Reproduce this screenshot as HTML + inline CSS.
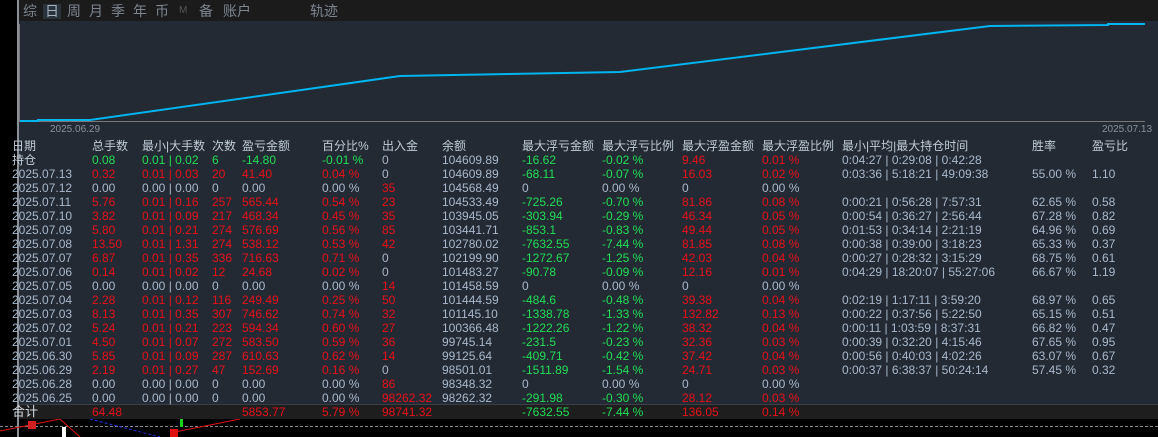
<!DOCTYPE html>
<html><head><meta charset="utf-8"><style>
*{margin:0;padding:0;box-sizing:border-box}
body{width:1158px;height:437px;background:#000;position:relative;overflow:hidden;font-family:"Liberation Sans","Noto Sans CJK SC",sans-serif}
#top{position:absolute;left:19px;top:0;width:1139px;height:21px;background:#1b1b1b}
.tab{position:absolute;top:3px;font-size:14px;color:#7c8590;line-height:16px}
#panel{position:absolute;left:19px;top:21px;width:1139px;height:398px;background:#232a33}
#tot{position:absolute;left:19px;top:404px;width:1139px;height:15px;background:#1e1e1e;border-top:1px solid #3a3f45}
table{position:absolute;left:12px;top:139px;border-collapse:collapse;table-layout:fixed;font-size:12px;color:#a8b8cc}
td{height:14px;line-height:14px;padding:0;white-space:nowrap;overflow:visible}
tr.h td{font-size:12px;color:#c0ccd8;height:14px}
.g{color:#22dd55}.r{color:#e8101a}
</style></head><body>
<div style="position:absolute;left:17px;top:0;width:2px;height:437px;background:#8a9098"></div>
<div id="top"></div>
<div class="tab" style="left:23px">综</div>
<div style="position:absolute;left:43px;top:4px;width:18px;height:15px;background:#2a323c"></div>
<div class="tab" style="left:45px;color:#a8b4c0">日</div>
<div class="tab" style="left:67px">周</div>
<div class="tab" style="left:89px">月</div>
<div class="tab" style="left:111px">季</div>
<div class="tab" style="left:133px">年</div>
<div class="tab" style="left:155px">币</div>
<div class="tab" style="left:179px;font-size:10px;color:#555">M</div>
<div class="tab" style="left:199px">备</div>
<div class="tab" style="left:223px">账户</div>
<div class="tab" style="left:310px">轨迹</div>
<div id="panel"></div>
<svg style="position:absolute;left:0;top:0" width="1158" height="140">
<line x1="19.5" y1="24" x2="19.5" y2="122" stroke="#777" stroke-width="1"/>
<line x1="19" y1="121.5" x2="1145" y2="121.5" stroke="#777" stroke-width="1"/>
<polyline fill="none" stroke="#00b4f0" stroke-width="2" points="20,121 38,121 38,120 90,120 400,76 620,72 990,26 1108,25 1108,24 1145,24"/>
<text x="50" y="132" font-size="10" fill="#8890a0" font-family="Liberation Sans">2025.06.29</text>
<text x="1102" y="132" font-size="10" fill="#8890a0" font-family="Liberation Sans">2025.07.13</text>
</svg>
<div id="tot"></div>
<table>
<colgroup><col style="width:80px"><col style="width:50px"><col style="width:70px"><col style="width:30px"><col style="width:80px"><col style="width:60px"><col style="width:60px"><col style="width:80px"><col style="width:80px"><col style="width:80px"><col style="width:80px"><col style="width:80px"><col style="width:190px"><col style="width:60px"><col style="width:60px"></colgroup>
<tr class="h"><td>日期</td><td>总手数</td><td>最小|大手数</td><td>次数</td><td>盈亏金额</td><td>百分比%</td><td>出入金</td><td>余额</td><td>最大浮亏金额</td><td>最大浮亏比例</td><td>最大浮盈金额</td><td>最大浮盈比例</td><td>最小|平均|最大持仓时间</td><td>胜率</td><td>盈亏比</td></tr>
<tr><td style="color:#c0ccd8">持仓</td><td class="g">0.08</td><td class="g">0.01 | 0.02</td><td class="g">6</td><td class="g">-14.80</td><td class="g">-0.01 %</td><td>0</td><td>104609.89</td><td class="g">-16.62</td><td class="g">-0.02 %</td><td class="r">9.46</td><td class="r">0.01 %</td><td>0:04:27 | 0:29:08 | 0:42:28</td><td></td><td></td></tr>
<tr><td>2025.07.13</td><td class="r">0.32</td><td class="r">0.01 | 0.03</td><td class="r">20</td><td class="r">41.40</td><td class="r">0.04 %</td><td>0</td><td>104609.89</td><td class="g">-68.11</td><td class="g">-0.07 %</td><td class="r">16.03</td><td class="r">0.02 %</td><td>0:03:36 | 5:18:21 | 49:09:38</td><td>55.00 %</td><td>1.10</td></tr>
<tr><td>2025.07.12</td><td>0.00</td><td>0.00 | 0.00</td><td>0</td><td>0.00</td><td>0.00 %</td><td class="r">35</td><td>104568.49</td><td>0</td><td>0.00 %</td><td>0</td><td>0.00 %</td><td></td><td></td><td></td></tr>
<tr><td>2025.07.11</td><td class="r">5.76</td><td class="r">0.01 | 0.16</td><td class="r">257</td><td class="r">565.44</td><td class="r">0.54 %</td><td class="r">23</td><td>104533.49</td><td class="g">-725.26</td><td class="g">-0.70 %</td><td class="r">81.86</td><td class="r">0.08 %</td><td>0:00:21 | 0:56:28 | 7:57:31</td><td>62.65 %</td><td>0.58</td></tr>
<tr><td>2025.07.10</td><td class="r">3.82</td><td class="r">0.01 | 0.09</td><td class="r">217</td><td class="r">468.34</td><td class="r">0.45 %</td><td class="r">35</td><td>103945.05</td><td class="g">-303.94</td><td class="g">-0.29 %</td><td class="r">46.34</td><td class="r">0.05 %</td><td>0:00:54 | 0:36:27 | 2:56:44</td><td>67.28 %</td><td>0.82</td></tr>
<tr><td>2025.07.09</td><td class="r">5.80</td><td class="r">0.01 | 0.21</td><td class="r">274</td><td class="r">576.69</td><td class="r">0.56 %</td><td class="r">85</td><td>103441.71</td><td class="g">-853.1</td><td class="g">-0.83 %</td><td class="r">49.44</td><td class="r">0.05 %</td><td>0:01:53 | 0:34:14 | 2:21:19</td><td>64.96 %</td><td>0.69</td></tr>
<tr><td>2025.07.08</td><td class="r">13.50</td><td class="r">0.01 | 1.31</td><td class="r">274</td><td class="r">538.12</td><td class="r">0.53 %</td><td class="r">42</td><td>102780.02</td><td class="g">-7632.55</td><td class="g">-7.44 %</td><td class="r">81.85</td><td class="r">0.08 %</td><td>0:00:38 | 0:39:00 | 3:18:23</td><td>65.33 %</td><td>0.37</td></tr>
<tr><td>2025.07.07</td><td class="r">6.87</td><td class="r">0.01 | 0.35</td><td class="r">336</td><td class="r">716.63</td><td class="r">0.71 %</td><td>0</td><td>102199.90</td><td class="g">-1272.67</td><td class="g">-1.25 %</td><td class="r">42.03</td><td class="r">0.04 %</td><td>0:00:27 | 0:28:32 | 3:15:29</td><td>68.75 %</td><td>0.61</td></tr>
<tr><td>2025.07.06</td><td class="r">0.14</td><td class="r">0.01 | 0.02</td><td class="r">12</td><td class="r">24.68</td><td class="r">0.02 %</td><td>0</td><td>101483.27</td><td class="g">-90.78</td><td class="g">-0.09 %</td><td class="r">12.16</td><td class="r">0.01 %</td><td>0:04:29 | 18:20:07 | 55:27:06</td><td>66.67 %</td><td>1.19</td></tr>
<tr><td>2025.07.05</td><td>0.00</td><td>0.00 | 0.00</td><td>0</td><td>0.00</td><td>0.00 %</td><td class="r">14</td><td>101458.59</td><td>0</td><td>0.00 %</td><td>0</td><td>0.00 %</td><td></td><td></td><td></td></tr>
<tr><td>2025.07.04</td><td class="r">2.28</td><td class="r">0.01 | 0.12</td><td class="r">116</td><td class="r">249.49</td><td class="r">0.25 %</td><td class="r">50</td><td>101444.59</td><td class="g">-484.6</td><td class="g">-0.48 %</td><td class="r">39.38</td><td class="r">0.04 %</td><td>0:02:19 | 1:17:11 | 3:59:20</td><td>68.97 %</td><td>0.65</td></tr>
<tr><td>2025.07.03</td><td class="r">8.13</td><td class="r">0.01 | 0.35</td><td class="r">307</td><td class="r">746.62</td><td class="r">0.74 %</td><td class="r">32</td><td>101145.10</td><td class="g">-1338.78</td><td class="g">-1.33 %</td><td class="r">132.82</td><td class="r">0.13 %</td><td>0:00:22 | 0:37:56 | 5:22:50</td><td>65.15 %</td><td>0.51</td></tr>
<tr><td>2025.07.02</td><td class="r">5.24</td><td class="r">0.01 | 0.21</td><td class="r">223</td><td class="r">594.34</td><td class="r">0.60 %</td><td class="r">27</td><td>100366.48</td><td class="g">-1222.26</td><td class="g">-1.22 %</td><td class="r">38.32</td><td class="r">0.04 %</td><td>0:00:11 | 1:03:59 | 8:37:31</td><td>66.82 %</td><td>0.47</td></tr>
<tr><td>2025.07.01</td><td class="r">4.50</td><td class="r">0.01 | 0.07</td><td class="r">272</td><td class="r">583.50</td><td class="r">0.59 %</td><td class="r">36</td><td>99745.14</td><td class="g">-231.5</td><td class="g">-0.23 %</td><td class="r">32.36</td><td class="r">0.03 %</td><td>0:00:39 | 0:32:20 | 4:15:46</td><td>67.65 %</td><td>0.95</td></tr>
<tr><td>2025.06.30</td><td class="r">5.85</td><td class="r">0.01 | 0.09</td><td class="r">287</td><td class="r">610.63</td><td class="r">0.62 %</td><td class="r">14</td><td>99125.64</td><td class="g">-409.71</td><td class="g">-0.42 %</td><td class="r">37.42</td><td class="r">0.04 %</td><td>0:00:56 | 0:40:03 | 4:02:26</td><td>63.07 %</td><td>0.67</td></tr>
<tr><td>2025.06.29</td><td class="r">2.19</td><td class="r">0.01 | 0.27</td><td class="r">47</td><td class="r">152.69</td><td class="r">0.16 %</td><td>0</td><td>98501.01</td><td class="g">-1511.89</td><td class="g">-1.54 %</td><td class="r">24.71</td><td class="r">0.03 %</td><td>0:00:37 | 6:38:37 | 50:24:14</td><td>57.45 %</td><td>0.32</td></tr>
<tr><td>2025.06.28</td><td>0.00</td><td>0.00 | 0.00</td><td>0</td><td>0.00</td><td>0.00 %</td><td class="r">86</td><td>98348.32</td><td>0</td><td>0.00 %</td><td>0</td><td>0.00 %</td><td></td><td></td><td></td></tr>
<tr><td>2025.06.25</td><td>0.00</td><td>0.00 | 0.00</td><td>0</td><td>0.00</td><td>0.00 %</td><td class="r">98262.32</td><td>98262.32</td><td class="g">-291.98</td><td class="g">-0.30 %</td><td class="r">28.12</td><td class="r">0.03 %</td><td></td><td></td><td></td></tr>
<tr><td style="font-size:13px;color:#d0d8e0">合计</td><td class="r">64.48</td><td></td><td></td><td class="r">5853.77</td><td class="r">5.79 %</td><td class="r">98741.32</td><td></td><td class="g">-7632.55</td><td class="g">-7.44 %</td><td class="r">136.05</td><td class="r">0.14 %</td><td></td><td></td><td></td></tr>
</table>
<svg style="position:absolute;left:0;top:419px" width="1158" height="18">
<line x1="0" y1="7.5" x2="1158" y2="7.5" stroke="#888" stroke-dasharray="3,2"/>
<polyline fill="none" stroke="#e01010" points="0,12 60,0 80,18"/>
<polyline fill="none" stroke="#e01010" points="170,14 240,0"/>
<line x1="90" y1="0" x2="160" y2="18" stroke="#2030e0" stroke-dasharray="3,2"/>
<rect x="28" y="2" width="8" height="8" fill="#d02020"/>
<rect x="62" y="8" width="4" height="10" fill="#fff"/>
<rect x="180" y="0" width="3" height="8" fill="#20d020"/>
<rect x="170" y="10" width="8" height="8" fill="#e01010"/>
</svg>
</body></html>
